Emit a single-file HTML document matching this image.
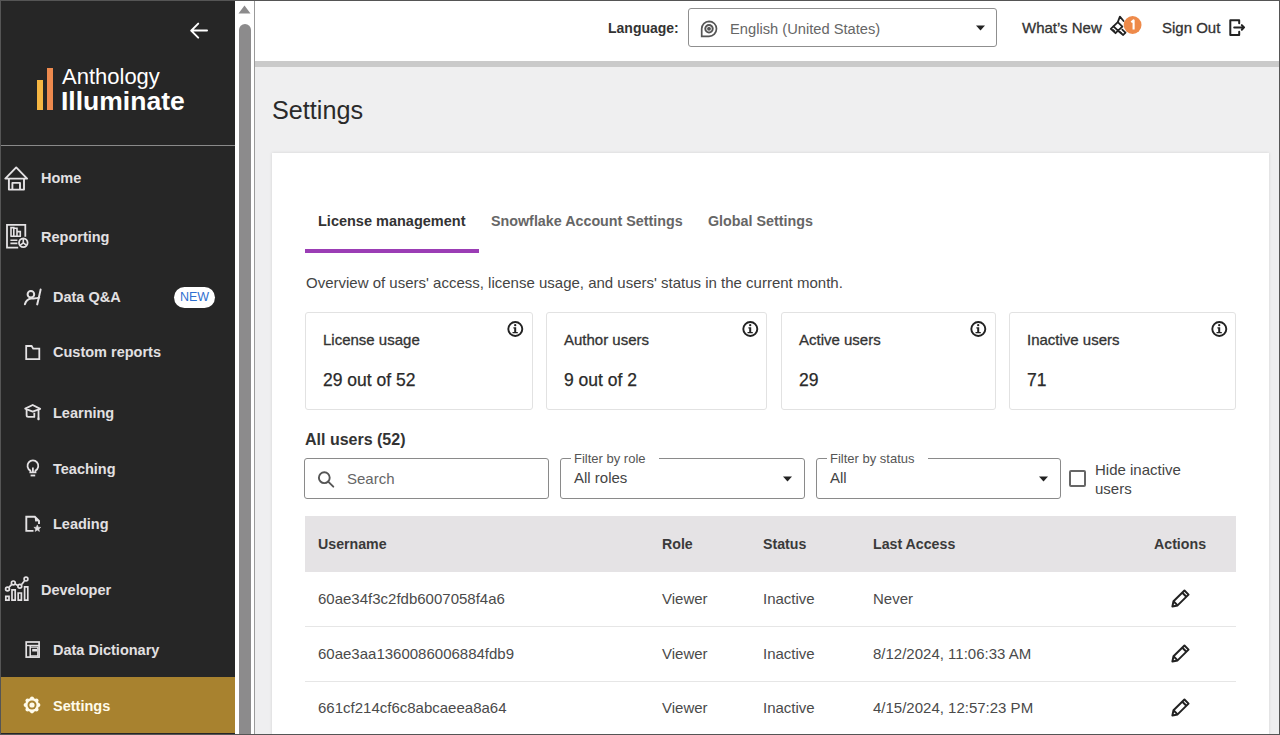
<!DOCTYPE html>
<html><head><meta charset="utf-8">
<style>
*{box-sizing:border-box;margin:0;padding:0}
html,body{width:1280px;height:735px;overflow:hidden;background:#efeff0;font-family:"Liberation Sans",sans-serif}
.abs{position:absolute}
#frame{position:absolute;left:0;top:0;width:1280px;height:735px;border:1px solid #555;pointer-events:none;z-index:50}
#side{position:absolute;left:0;top:0;width:235px;height:735px;background:#262626}
.nav{position:absolute;color:#e2e0e2;font-weight:bold;font-size:14.5px;white-space:nowrap;line-height:20px}
.ico{position:absolute}
#scroll{position:absolute;left:235px;top:0;width:20px;height:735px;background:#fff}
#top{position:absolute;left:255px;top:0;width:1025px;height:61px;background:#fff}
#band{position:absolute;left:255px;top:61px;width:1025px;height:6px;background:#cacaca}
#card{position:absolute;left:272px;top:153px;width:997px;height:600px;background:#fff;box-shadow:0 0 3px rgba(0,0,0,0.12)}
.t{position:absolute;white-space:nowrap;line-height:20px}
.stat{position:absolute;top:312px;height:98px;border:1px solid #e2e2e2;border-radius:3px;background:#fff}
.stat .lbl{position:absolute;left:17px;top:17px;font-size:15px;color:#333;-webkit-text-stroke:0.3px #333;line-height:20px;white-space:nowrap}
.stat .val{position:absolute;left:17px;top:56px;font-size:17.5px;color:#2a2a2a;-webkit-text-stroke:0.25px #2a2a2a;line-height:22px;white-space:nowrap}
.stat svg{position:absolute;top:8px}
.row{position:absolute;left:305px;width:931px;height:55px;border-bottom:1px solid #e6e6e6}
.cell{position:absolute;font-size:15px;color:#4a4a4a;line-height:20px;white-space:nowrap}
.hcell{position:absolute;font-size:14.2px;font-weight:bold;color:#3a3a3a;line-height:20px;white-space:nowrap}
</style></head><body>
<div id="side">
  <!-- back arrow -->
  <svg class="ico" style="left:189px;top:21px" width="20" height="20" viewBox="0 0 20 20"><path d="M18 9.6H3M9.2 2.6 2.2 9.6l7 7" fill="none" stroke="#fff" stroke-width="2" stroke-linecap="round" stroke-linejoin="round"/></svg>
  <!-- logo -->
  <div class="abs" style="left:37px;top:80px;width:6px;height:30px;background:#f5b642"></div>
  <div class="abs" style="left:47px;top:68px;width:6px;height:42px;background:#ee8a4e"></div>
  <div class="t" style="left:62px;top:67px;font-size:22px;color:#fff;letter-spacing:0px">Anthology</div>
  <div class="t" style="left:61px;top:91px;font-size:26.5px;font-weight:bold;color:#fff;letter-spacing:0px">Illuminate</div>
  <div class="abs" style="left:0;top:145px;width:235px;height:1px;background:#8a8a8a"></div>


  <div class="abs" style="left:0;top:677px;width:235px;height:56px;background:#a8822f"></div>
  <!-- sidebar icons -->
  <svg class="ico" style="left:3px;top:165px" width="27" height="28" viewBox="0 0 27 28" fill="none" stroke="#e4e2e4" stroke-width="1.9" stroke-linejoin="round"><path d="M2.3 13.6 13.2 2.4 24.1 13.6Z"/><path d="M5.9 13.6V24.6H21V13.6"/><path d="M9.4 24.6V17.9H17V24.6"/></svg>
  <svg class="ico" style="left:4px;top:222px" width="26" height="28" viewBox="0 0 26 28" fill="none" stroke="#e4e2e4" stroke-width="1.8"><path d="M14.2 25.6H3V2.9H21.3V14.8"/><path d="M7 14.2V5.6H9.8V14.2M9.8 14.2V6.2H13V14.2M13 14.2V9.6H16.3V14.2M6.4 14.2H17" stroke-width="1.6"/><path d="M6.4 18.2H13.4M6.4 21.4H13.4" stroke-width="1.6"/><circle cx="19.3" cy="20.8" r="4.3" fill="#262626"/><path d="M19.3 16.5V20.8L16 23.4M19.3 20.8 22.6 23.4" stroke-width="1.6"/></svg>
  <svg class="ico" style="left:23px;top:288px" width="20" height="18" viewBox="0 0 20 18" fill="none" stroke="#e4e2e4" stroke-width="2" stroke-linecap="round"><circle cx="7.9" cy="6.3" r="3.3"/><path d="M1.9 16.3C3 12.8 5 11 8 10.6 10.6 10.3 13.5 10.4 16.2 9.6"/><path d="M17.6 1.6C16.6 6 15.6 11 14.2 16.4"/></svg>
  <svg class="ico" style="left:24px;top:344px" width="18" height="17" viewBox="0 0 18 17" fill="none" stroke="#e4e2e4" stroke-width="1.8"><path d="M2.2 2H7.6L9.2 4.6H15.3V15.1H2.2Z"/></svg>
  <svg class="ico" style="left:23px;top:403px" width="19" height="19" viewBox="0 0 19 19" fill="none" stroke="#e4e2e4" stroke-width="1.8" stroke-linejoin="round"><path d="M2.2 5.6 9.7 2 17.2 5.9 9.7 8.6Z"/><path d="M3.6 6.6V12.3Q3.6 13.9 5.4 13.9H11.3V9.8"/><path d="M15.5 6.6V15.3"/><rect x="14.4" y="14.6" width="2.2" height="2.6" rx="0.8" fill="#e4e2e4" stroke="none"/></svg>
  <svg class="ico" style="left:25px;top:458px" width="16" height="20" viewBox="0 0 16 20" fill="none" stroke="#e4e2e4" stroke-width="1.8"><path d="M5.3 14.4V12.6A5.4 5.4 0 1 1 10.5 12.6V14.4Z"/><path d="M7.9 9.6V14.4"/><path d="M5.6 17.5H10.2"/></svg>
  <svg class="ico" style="left:24px;top:514px" width="18" height="19" viewBox="0 0 18 19" fill="none" stroke="#e4e2e4" stroke-width="1.9"><path d="M9.5 16.9H2.3V2.7H10.8L15 6.9V10"/><path d="M10.6 2.7 15.2 7.3 11.2 7.6Z" fill="#e4e2e4" stroke="none"/><path d="M13.30 10.90 L14.24 13.21 L16.72 13.39 L14.82 14.99 L15.42 17.41 L13.30 16.10 L11.18 17.41 L11.78 14.99 L9.88 13.39 L12.36 13.21Z" fill="#e4e2e4" stroke="#e4e2e4" stroke-width="0.6" stroke-linejoin="round"/></svg>
  <svg class="ico" style="left:4px;top:575px" width="26" height="27" viewBox="0 0 26 27" fill="none" stroke="#e4e2e4" stroke-width="1.7"><path d="M1.8 21.3H5V25.2H1.8ZM8 14.8H11.2V25.2H8ZM14.2 18H17.4V25.2H14.2ZM20.6 11.8H23.8V25.2H20.6Z"/><path d="M5.1 12.2 7.6 9.7M11.2 8.9 13.8 10.4M17.6 9.6 20.4 6"/><circle cx="3.5" cy="14" r="1.9"/><circle cx="9.3" cy="7.9" r="1.9"/><circle cx="15.8" cy="11.3" r="1.9"/><circle cx="22" cy="4.1" r="1.9"/></svg>
  <svg class="ico" style="left:24px;top:640px" width="18" height="19" viewBox="0 0 18 19" fill="none" stroke="#e4e2e4" stroke-width="1.7"><rect x="2.2" y="2" width="12.9" height="15.1"/><path d="M2.2 5.5H15.1" stroke-width="1.4"/><path d="M6.2 5.5V17.1" stroke-width="1.5"/><path d="M6.2 7.2H13.8V15.8H6.2" stroke-width="1.3"/><rect x="8.2" y="8.9" width="4.8" height="2.6" fill="#e4e2e4" stroke="none"/></svg>
  <svg class="ico" style="left:23px;top:696px" width="18" height="18" viewBox="0 0 18 18"><g fill="#fffbea"><circle cx="9" cy="9" r="6.9"/><circle cx="15.30" cy="9.00" r="2.1"/><circle cx="13.45" cy="13.45" r="2.1"/><circle cx="9.00" cy="15.30" r="2.1"/><circle cx="4.55" cy="13.45" r="2.1"/><circle cx="2.70" cy="9.00" r="2.1"/><circle cx="4.55" cy="4.55" r="2.1"/><circle cx="9.00" cy="2.70" r="2.1"/><circle cx="13.45" cy="4.55" r="2.1"/></g><circle cx="9" cy="9" r="4.5" fill="#a8822f"/><circle cx="9" cy="9" r="2.6" fill="#fffbea"/></svg>
  <div class="nav" style="left:41px;top:168px">Home</div>
  <div class="nav" style="left:41px;top:227px">Reporting</div>
  <div class="nav" style="left:53px;top:287px">Data Q&amp;A</div>
  <div class="abs" style="left:174px;top:287px;width:41px;height:21px;border-radius:11px;background:#fff;color:#2f6fd0;font-size:12.5px;line-height:21px;text-align:center">NEW</div>
  <div class="nav" style="left:53px;top:342px">Custom reports</div>
  <div class="nav" style="left:53px;top:403px">Learning</div>
  <div class="nav" style="left:53px;top:459px">Teaching</div>
  <div class="nav" style="left:53px;top:514px">Leading</div>
  <div class="nav" style="left:41px;top:580px">Developer</div>
  <div class="nav" style="left:53px;top:640px">Data Dictionary</div>
  <div class="nav" style="left:53px;top:696px;color:#fffbea">Settings</div>
</div>
<div id="scroll">
  <svg class="ico" style="left:3px;top:5px" width="13" height="9" viewBox="0 0 13 9"><path d="M6.5 0.5 12.5 8.5H0.5z" fill="#8c8b8c"/></svg>
  <div class="abs" style="left:4px;top:24px;width:12px;height:711px;border-radius:6px 6px 0 0;background:#8c8b8c"></div>
  <div class="abs" style="left:19px;top:0;width:1px;height:735px;background:#9a9a9a"></div>
</div>
<div id="top"></div>
<div id="band"></div>
<div id="card"></div>
<!-- top bar content -->
<div class="t" style="left:608px;top:18px;font-size:14px;font-weight:bold;color:#333">Language:</div>
<div class="abs" style="left:688px;top:8px;width:309px;height:39px;border:1px solid #8f8f8f;border-radius:3px;background:#fff"></div>
<svg class="ico" style="left:700px;top:20px" width="18" height="18" viewBox="0 0 18 18"><path d="M9 1.3a7.5 7.5 0 1 1 0 15H1.7V8.8A7.5 7.5 0 0 1 9 1.3z" fill="none" stroke="#555" stroke-width="1.7"/><circle cx="9" cy="8.8" r="4.7" fill="#555"/><circle cx="9" cy="8.8" r="2.4" fill="none" stroke="#fff" stroke-width="0.9"/></svg>
<div class="t" style="left:730px;top:19px;font-size:14.7px;color:#666">English (United States)</div>
<svg class="ico" style="left:976px;top:25px" width="9" height="6" viewBox="0 0 9 6"><path d="M0 0.5h9L4.5 5.5z" fill="#222"/></svg>
<div class="t" style="left:1022px;top:18px;font-size:15px;color:#333;-webkit-text-stroke:0.3px #333">What’s New</div>
<div class="t" style="left:1162px;top:18px;font-size:15px;color:#333;-webkit-text-stroke:0.3px #333">Sign Out</div>
<!-- whats new icon -->
<svg class="ico" style="left:1105px;top:12px" width="26" height="28" viewBox="0 0 26 28" fill="none" stroke="#222" stroke-width="1.8" stroke-linejoin="round" stroke-linecap="round"><path d="M18.6 9 14.9 4.7 12.8 10.1 5.8 16.8 10.5 21.2 13 18.7 18.2 23 20.5 20.6 17.3 17.6"/><path d="M12.8 10.1 17.4 14.6 13 18.7 8.5 14.3"/><path d="M8 17.6 9.7 19.2M14.6 19.6 16.4 21.1" stroke-width="1.3"/></svg>
<svg class="ico" style="left:1123px;top:15px" width="20" height="20" viewBox="0 0 20 20"><circle cx="9.6" cy="10" r="8.9" fill="#ee8a4a"/><path d="M8.3 7.3 10.6 5.4V14.4" fill="none" stroke="#fff" stroke-width="2.1" stroke-linejoin="round"/></svg>
<svg class="ico" style="left:1227px;top:17px" width="20" height="20" viewBox="0 0 20 20" fill="none" stroke="#222" stroke-width="2" stroke-linecap="round" stroke-linejoin="round"><path d="M12.2 6.3V3.2H3.3V18.1H12.2V14.7"/><path d="M7.2 10.4H17M14.8 8.1 17.1 10.4 14.8 12.7"/></svg>

<!-- title -->
<div class="t" style="left:272px;top:96px;font-size:25.2px;color:#2a2a2a;line-height:28px">Settings</div>
<!-- tabs -->
<div class="t" style="left:318px;top:211px;font-size:14.5px;font-weight:bold;color:#333">License management</div>
<div class="t" style="left:491px;top:211px;font-size:14.3px;font-weight:bold;color:#666">Snowflake Account Settings</div>
<div class="t" style="left:708px;top:211px;font-size:14.3px;font-weight:bold;color:#666">Global Settings</div>
<div class="abs" style="left:305px;top:249px;width:174px;height:4px;background:#9b3db5"></div>
<div class="t" style="left:306px;top:273px;font-size:15px;color:#444">Overview of users' access, license usage, and users' status in the current month.</div>
<!-- stats -->
<div class="stat" style="left:305px;width:228px"><div class="lbl">License usage</div><div class="val">29 out of 52</div></div>
<div class="stat" style="left:546px;width:221px"><div class="lbl">Author users</div><div class="val">9 out of 2</div></div>
<div class="stat" style="left:781px;width:215px"><div class="lbl">Active users</div><div class="val">29</div></div>
<div class="stat" style="left:1009px;width:227px"><div class="lbl">Inactive users</div><div class="val">71</div></div>
<svg class="ico" style="left:506px;top:320px" width="18" height="18" viewBox="0 0 18 18"><circle cx="9.3" cy="9" r="7" fill="none" stroke="#222" stroke-width="1.9"/><circle cx="9.2" cy="5.2" r="1.15" fill="#222"/><path d="M7.4 7.3H10.2V12.1H11.8V13.3H6.5V12.1H8.2V8.5H7.4Z" fill="#222"/></svg><svg class="ico" style="left:741px;top:320px" width="18" height="18" viewBox="0 0 18 18"><circle cx="9.3" cy="9" r="7" fill="none" stroke="#222" stroke-width="1.9"/><circle cx="9.2" cy="5.2" r="1.15" fill="#222"/><path d="M7.4 7.3H10.2V12.1H11.8V13.3H6.5V12.1H8.2V8.5H7.4Z" fill="#222"/></svg><svg class="ico" style="left:969px;top:320px" width="18" height="18" viewBox="0 0 18 18"><circle cx="9.3" cy="9" r="7" fill="none" stroke="#222" stroke-width="1.9"/><circle cx="9.2" cy="5.2" r="1.15" fill="#222"/><path d="M7.4 7.3H10.2V12.1H11.8V13.3H6.5V12.1H8.2V8.5H7.4Z" fill="#222"/></svg><svg class="ico" style="left:1210px;top:320px" width="18" height="18" viewBox="0 0 18 18"><circle cx="9.3" cy="9" r="7" fill="none" stroke="#222" stroke-width="1.9"/><circle cx="9.2" cy="5.2" r="1.15" fill="#222"/><path d="M7.4 7.3H10.2V12.1H11.8V13.3H6.5V12.1H8.2V8.5H7.4Z" fill="#222"/></svg>
<div class="t" style="left:305px;top:430px;font-size:16px;font-weight:bold;color:#333">All users (52)</div>
<!-- filters -->
<div class="abs" style="left:304px;top:458px;width:245px;height:41px;border:1px solid #8a8a8a;border-radius:3px;background:#fff"></div>
<svg class="ico" style="left:316px;top:470px" width="20" height="20" viewBox="0 0 20 20" fill="none" stroke="#555" stroke-width="1.9" stroke-linecap="round"><circle cx="8.3" cy="7.7" r="5.4"/><path d="M12.2 11.6 17.3 16.7"/></svg>
<div class="t" style="left:347px;top:469px;font-size:15px;color:#666">Search</div>
<div class="abs" style="left:560px;top:458px;width:245px;height:41px;border:1px solid #8a8a8a;border-radius:3px;background:#fff"></div>
<div class="t" style="left:571px;top:450px;padding:0 13px 0 3px;font-size:13px;color:#555;background:#fff;line-height:18px">Filter by role</div>
<div class="t" style="left:574px;top:468px;font-size:15px;color:#444">All roles</div>
<svg class="ico" style="left:783px;top:476px" width="9" height="6" viewBox="0 0 9 6"><path d="M0 0.5h9L4.5 5.5z" fill="#222"/></svg>
<div class="abs" style="left:816px;top:458px;width:245px;height:41px;border:1px solid #8a8a8a;border-radius:3px;background:#fff"></div>
<div class="t" style="left:827px;top:450px;padding:0 13px 0 3px;font-size:13px;color:#555;background:#fff;line-height:18px">Filter by status</div>
<div class="t" style="left:830px;top:468px;font-size:15px;color:#444">All</div>
<svg class="ico" style="left:1039px;top:476px" width="9" height="6" viewBox="0 0 9 6"><path d="M0 0.5h9L4.5 5.5z" fill="#222"/></svg>
<div class="abs" style="left:1069px;top:470px;width:17px;height:17px;border:2px solid #666;border-radius:2px"></div>
<div class="t" style="left:1095px;top:460px;font-size:15px;color:#444;line-height:19px">Hide inactive<br>users</div>
<!-- table -->
<div class="abs" style="left:305px;top:516px;width:931px;height:56px;background:#e5e3e5"></div>
<div class="hcell" style="left:318px;top:534px">Username</div>
<div class="hcell" style="left:662px;top:534px">Role</div>
<div class="hcell" style="left:763px;top:534px">Status</div>
<div class="hcell" style="left:873px;top:534px">Last Access</div>
<div class="hcell" style="left:1154px;top:534px">Actions</div>
<div class="row" style="top:572px"></div>
<div class="row" style="top:627px"></div>
<div class="cell" style="left:318px;top:589px">60ae34f3c2fdb6007058f4a6</div>
<div class="cell" style="left:662px;top:589px">Viewer</div>
<div class="cell" style="left:763px;top:589px">Inactive</div>
<div class="cell" style="left:873px;top:589px">Never</div>
<div class="cell" style="left:318px;top:644px">60ae3aa1360086006884fdb9</div>
<div class="cell" style="left:662px;top:644px">Viewer</div>
<div class="cell" style="left:763px;top:644px">Inactive</div>
<div class="cell" style="left:873px;top:644px">8/12/2024, 11:06:33 AM</div>
<div class="cell" style="left:318px;top:698px">661cf214cf6c8abcaeea8a64</div>
<div class="cell" style="left:662px;top:698px">Viewer</div>
<div class="cell" style="left:763px;top:698px">Inactive</div>
<div class="cell" style="left:873px;top:698px">4/15/2024, 12:57:23 PM</div>

<div id="frame"></div>
<svg class="ico" style="left:1165px;top:585px" width="26" height="26" viewBox="0 0 26 26" fill="none" stroke="#222" stroke-width="2" stroke-linejoin="round"><path d="M7.4 21.5 8.5 16.3 19.45 5.55 23.55 9.65 12.6 20.4Z"/><path d="M17.3 7.7 21.4 11.8"/><path d="M8.5 16.3 12.6 20.4"/></svg><svg class="ico" style="left:1165px;top:640px" width="26" height="26" viewBox="0 0 26 26" fill="none" stroke="#222" stroke-width="2" stroke-linejoin="round"><path d="M7.4 21.5 8.5 16.3 19.45 5.55 23.55 9.65 12.6 20.4Z"/><path d="M17.3 7.7 21.4 11.8"/><path d="M8.5 16.3 12.6 20.4"/></svg><svg class="ico" style="left:1165px;top:694px" width="26" height="26" viewBox="0 0 26 26" fill="none" stroke="#222" stroke-width="2" stroke-linejoin="round"><path d="M7.4 21.5 8.5 16.3 19.45 5.55 23.55 9.65 12.6 20.4Z"/><path d="M17.3 7.7 21.4 11.8"/><path d="M8.5 16.3 12.6 20.4"/></svg>
</body></html>
